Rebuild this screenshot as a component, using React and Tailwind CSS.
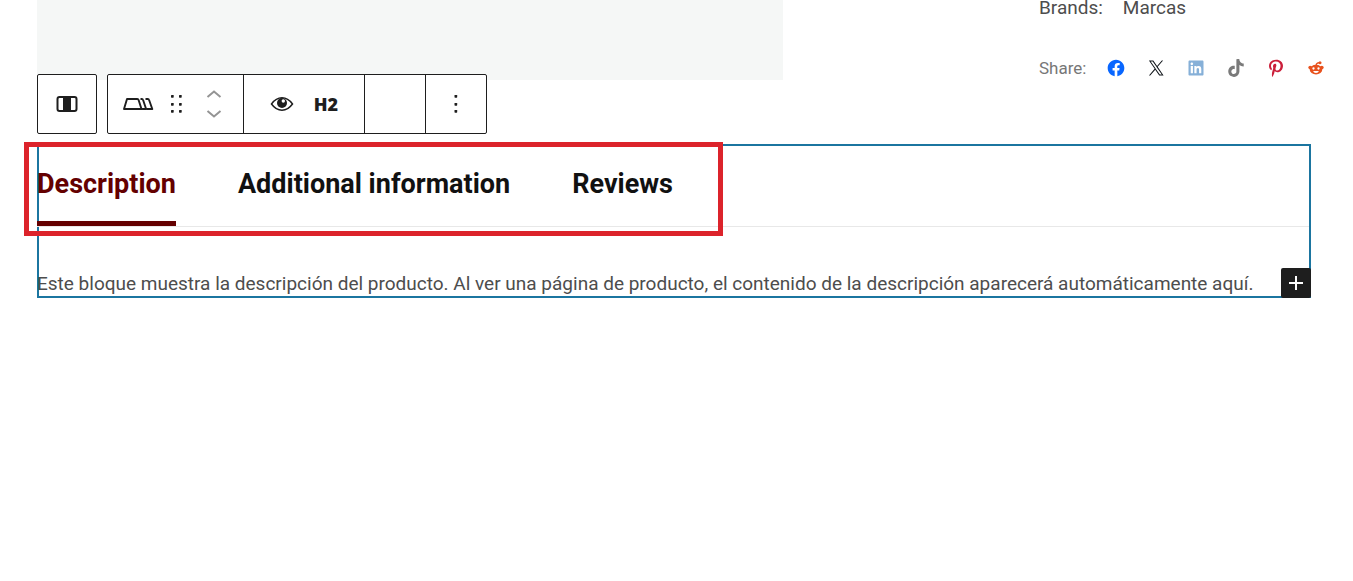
import React from "react";

const socials = [
  {
    name: "Facebook",
    color: "text-[#0866ff]",
    path: "M12 2C6.5 2 2 6.5 2 12c0 5 3.7 9.1 8.4 9.9v-7H7.9V12h2.5V9.8c0-2.5 1.5-3.9 3.8-3.9 1.1 0 2.2.2 2.2.2v2.5h-1.3c-1.2 0-1.6.8-1.6 1.6V12h2.8l-.4 2.9h-2.3v7C18.3 21.1 22 17 22 12c0-5.5-4.5-10-10-10z",
  },
  {
    name: "X",
    color: "text-[#0f1419]",
    path: "M13.982 10.622 20.54 3h-1.554l-5.693 6.618L8.745 3H3.5l6.876 10.007L3.5 21h1.554l6.012-6.989L15.868 21h5.245l-7.131-10.378Zm-2.128 2.474-.697-.997-5.543-7.93H8l4.474 6.4.697.996 5.815 8.318h-2.387l-4.745-6.787Z",
  },
  {
    name: "LinkedIn",
    color: "text-[#86b0d8]",
    path: "M19.7,3H4.3C3.582,3,3,3.582,3,4.3v15.4C3,20.418,3.582,21,4.3,21h15.4c0.718,0,1.3-0.582,1.3-1.3V4.3 C21,3.582,20.418,3,19.7,3z M8.339,18.338H5.667v-8.59h2.672V18.338z M7.004,8.574c-0.857,0-1.549-0.694-1.549-1.548 c0-0.855,0.691-1.548,1.549-1.548c0.854,0,1.547,0.694,1.547,1.548C8.551,7.881,7.858,8.574,7.004,8.574z M18.339,18.338h-2.669 v-4.177c0-0.996-0.017-2.278-1.387-2.278c-1.389,0-1.601,1.086-1.601,2.206v4.249h-2.667v-8.59h2.559v1.174h0.037 c0.356-0.675,1.227-1.387,2.526-1.387c2.703,0,3.203,1.779,3.203,4.092V18.338z",
  },
  {
    name: "TikTok",
    color: "text-[#7a7a7a]",
    viewBox: "-2 -2 36 36",
    path: "M16.708 0.027c1.745-0.027 3.48-0.011 5.213-0.027 0.105 2.041 0.839 4.12 2.333 5.563 1.491 1.479 3.6 2.156 5.652 2.385v5.369c-1.923-0.063-3.855-0.463-5.6-1.291-0.76-0.344-1.468-0.787-2.161-1.24-0.009 3.896 0.016 7.787-0.025 11.667-0.104 1.864-0.719 3.719-1.803 5.255-1.744 2.557-4.771 4.224-7.88 4.276-1.907 0.109-3.812-0.411-5.437-1.369-2.693-1.588-4.588-4.495-4.864-7.615-0.032-0.667-0.043-1.333-0.016-1.984 0.24-2.537 1.495-4.964 3.443-6.615 2.208-1.923 5.301-2.839 8.197-2.297 0.027 1.975-0.052 3.948-0.052 5.923-1.323-0.428-2.869-0.308-4.025 0.495-0.844 0.547-1.485 1.385-1.819 2.333-0.276 0.676-0.197 1.427-0.181 2.145 0.317 2.188 2.421 4.027 4.667 3.828 1.489-0.016 2.916-0.88 3.692-2.145 0.251-0.443 0.532-0.896 0.547-1.417 0.131-2.385 0.079-4.76 0.095-7.145 0.011-5.375-0.016-10.735 0.025-16.093z",
  },
  {
    name: "Pinterest",
    color: "text-[#cb1f3a]",
    path: "M12.289,2C6.617,2,3.606,5.648,3.606,9.622c0,1.846,1.025,4.146,2.666,4.878c0.25,0.111,0.381,0.063,0.439-0.169 c0.044-0.175,0.267-1.029,0.365-1.428c0.032-0.128,0.017-0.237-0.091-0.362C6.445,11.911,6.01,10.75,6.01,9.668 c0-2.777,2.194-5.464,5.933-5.464c3.23,0,5.49,2.108,5.49,5.122c0,3.407-1.794,5.768-4.13,5.768c-1.291,0-2.257-1.021-1.948-2.277 c0.372-1.495,1.089-3.112,1.089-4.191c0-0.967-0.542-1.775-1.663-1.775c-1.319,0-2.379,1.309-2.379,3.059 c0,1.115,0.394,1.869,0.394,1.869s-1.302,5.279-1.54,6.261c-0.405,1.666,0.053,4.368,0.094,4.604 c0.021,0.126,0.167,0.169,0.25,0.063c0.129-0.165,1.699-2.419,2.142-4.051c0.158-0.59,0.817-2.995,0.817-2.995 c0.43,0.784,1.681,1.446,3.013,1.446c3.963,0,6.822-3.494,6.822-7.833C20.394,5.112,16.849,2,12.289,2",
  },
];

function RedditIcon() {
  return (
    <svg className="size-5" viewBox="0 0 24 24" fill="currentColor" aria-hidden="true">
      <ellipse cx="12" cy="14" rx="7.500" ry="5.800" />
      <circle cx="5" cy="11.500" r="2.200" />
      <circle cx="19" cy="11.500" r="2.200" />
      <path d="M12 9q.2-3.300 4-3.500" fill="none" stroke="currentColor" strokeWidth="1.500" />
      <circle cx="16.800" cy="5.600" r="1.800" />
      <circle cx="9" cy="12.600" r="1.400" fill="#fff" />
      <circle cx="15" cy="12.600" r="1.400" fill="#fff" />
      <path d="M8.500 15.500h7q-.8 2.500-3.500 2.500t-3.500-2.500z" fill="#fff" />
    </svg>
  );
}

function Dots({ columns }) {
  return (
    <svg className="size-6" viewBox="0 0 24 24" fill="currentColor" aria-hidden="true">
      {columns.flatMap((x) =>
        [3, 11, 18].map((y) => <rect key={`${x}-${y}`} x={x} y={y} width="2.700" height="2.700" rx="0.6" />)
      )}
    </svg>
  );
}

function Chevron({ points }) {
  return (
    <svg className="h-2 w-4" viewBox="0 0 16 8" fill="none" stroke="currentColor" strokeWidth="2" aria-hidden="true">
      <polyline points={points} />
    </svg>
  );
}

function Toolbar() {
  return (
    <div role="toolbar" aria-label="Block tools" className="absolute bottom-full -left-0.5 mb-3 flex gap-2.5 text-[#1e1e1e]">
      <button type="button" aria-label="Select parent block" className="flex size-15 items-center justify-center rounded-xs border border-[#1e1e1e] bg-white">
        <svg className="h-4.5 w-6" viewBox="0 0 24 18" aria-hidden="true">
          <rect x="2.5" y="2" width="19" height="14" rx="2" fill="none" stroke="currentColor" strokeWidth="2" />
          <path d="M8 2h8v14H8z" fill="currentColor" />
        </svg>
      </button>
      <div className="flex h-15 divide-x divide-[#1e1e1e] rounded-xs border border-[#1e1e1e] bg-white">
        <div className="flex w-34 items-center pl-3.5">
          <button type="button" aria-label="Product details" className="w-8">
            <svg className="h-6 w-8" viewBox="0 0 32 24" fill="none" stroke="currentColor" strokeWidth="1.9" strokeLinejoin="round" aria-hidden="true">
              <path d="M2 17 5 7h10.300q1 0 1.300 1L19.500 17zM18.500 7h1.300q1 0 1.300 1l3 9h-4M23.500 7h2.300q1 0 1.300 1l3.200 9h-5.500" />
            </svg>
          </button>
          <button type="button" aria-label="Drag" className="ml-2.5">
            <Dots columns={[7, 15]} />
          </button>
          <div className="ml-4.5 flex flex-col gap-3 text-[#949494]">
            <button type="button" aria-label="Move up" className="block"><Chevron points="1.5,7 8,1.5 14.5,7" /></button>
            <button type="button" aria-label="Move down" className="block"><Chevron points="1.5,1 8,6.5 14.5,1" /></button>
          </div>
        </div>
        <div className="flex w-[121px] items-center justify-center gap-5">
          <button type="button" aria-label="Visibility">
            <svg className="h-6 w-6" viewBox="0 0 24 24" aria-hidden="true">
              <path d="M1.500 12Q6 5.800 12 5.800T22.500 12Q18 18.200 12 18.200T1.500 12z" fill="none" stroke="currentColor" strokeWidth="1.5" />
              <circle cx="12" cy="11" r="5" fill="currentColor" />
              <circle cx="13.300" cy="9" r="1.700" fill="#fff" />
            </svg>
          </button>
          <button type="button" className="font-['Noto_Sans',sans-serif] text-lg font-black">H2</button>
        </div>
        <div className="w-[61px]" />
        <button type="button" aria-label="Options" className="flex w-15 items-center justify-center">
          <Dots columns={[10.5]} />
        </button>
      </div>
    </div>
  );
}

export default function App() {
  return (
    <div className="bg-white font-[Roboto,sans-serif] text-[#4d4d4d]">
      <section className="flex justify-between pl-[37px]">
        <div className="h-20 w-[746px] bg-[#f5f7f6]" />
        <div className="w-[314px]">
          <p className="flex gap-5 text-[19px] leading-4">
            <span>Brands:</span>
            <span>Marcas</span>
          </p>
          <div className="mt-10 flex h-6 items-center text-[17px] leading-6 text-[#777777]">
            <span>Share:</span>
            <ul className="ml-5 flex gap-5">
              {socials.map(({ name, color, path, viewBox }) => (
                <li key={name}>
                  <a href="#" aria-label={name} className={`flex size-5 items-center justify-center ${color}`}>
                    <svg className="size-5" viewBox={viewBox || "0 0 24 24"} fill="currentColor" aria-hidden="true">
                      <path d={path} />
                    </svg>
                  </a>
                </li>
              ))}
              <li>
                <a href="#" aria-label="Reddit" className="flex size-5 items-center justify-center text-[#e8521e]">
                  <RedditIcon />
                </a>
              </li>
            </ul>
          </div>
        </div>
      </section>

      <section className="relative mt-16 mr-[42px] ml-[37px] border-2 border-[#1b75a0]">
        <Toolbar />
        <div role="tablist" className="-ml-0.5 flex gap-[62px] border-b border-[#e8e8e8] text-[27px] leading-8 font-bold text-[#111111]">
          <button type="button" role="tab" aria-selected="true" className="border-b-5 border-[#640000] pt-[22px] pb-[21px] text-[#640000]">Description</button>
          <button type="button" role="tab" aria-selected="false" className="border-b-5 border-transparent pt-[22px] pb-[21px]">Additional information</button>
          <button type="button" role="tab" aria-selected="false" className="border-b-5 border-transparent pt-[22px] pb-[21px]">Reviews</button>
        </div>
        <p className="-ml-0.5 pt-[45px] text-[19px] leading-6">
          Este bloque muestra la descripción del producto. Al ver una página de producto, el contenido de la descripción aparecerá automáticamente aquí.
        </p>
        <button type="button" aria-label="Add block" className="absolute -right-0.5 -bottom-0.5 flex size-7.5 items-center justify-center rounded-xs bg-[#1e1e1e] text-white">
          <svg className="size-4" viewBox="0 0 16 16" stroke="currentColor" strokeWidth="2" aria-hidden="true">
            <path d="M8 1v14M1 8h14" />
          </svg>
        </button>
        <div className="pointer-events-none absolute -top-1 -left-[15px] h-[94px] w-[699px] border-5 border-[#dc232b]" />
      </section>
    </div>
  );
}
